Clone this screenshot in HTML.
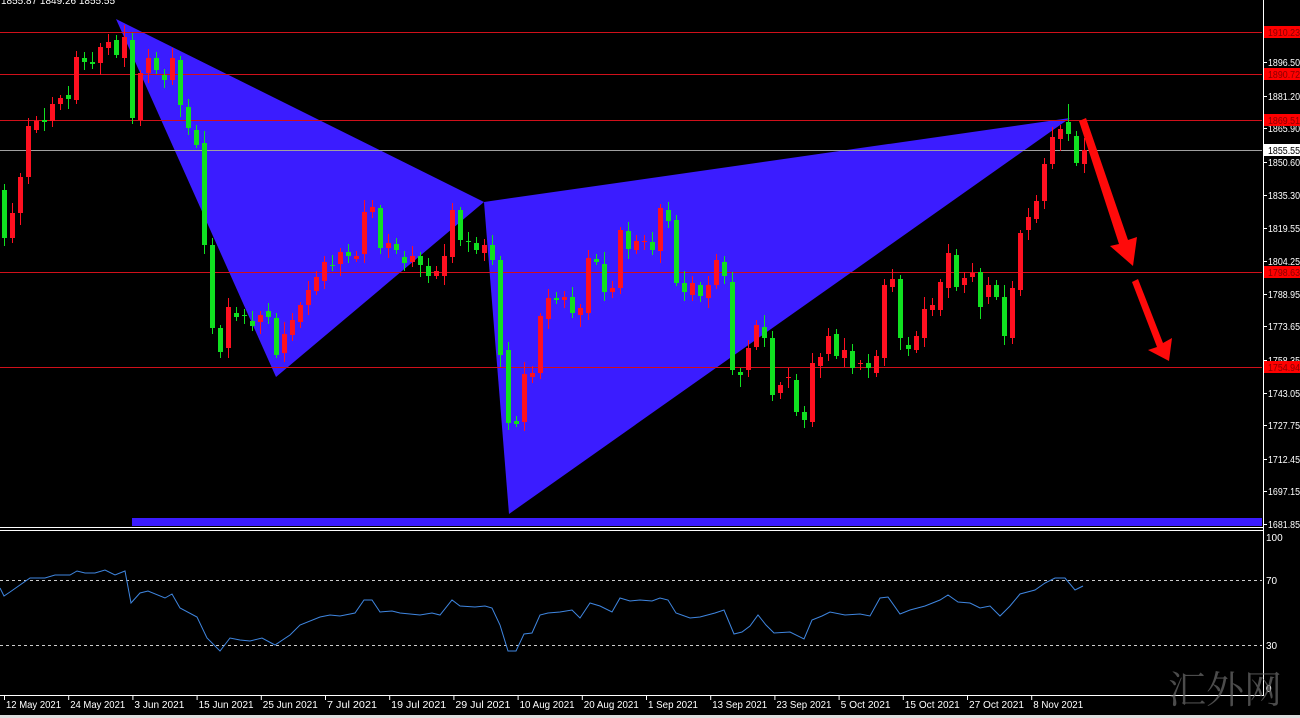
<!DOCTYPE html>
<html><head><meta charset="utf-8">
<style>
html,body{margin:0;padding:0;background:#000;overflow:hidden}
svg{display:block}
text{font-family:"Liberation Sans","DejaVu Sans",sans-serif;font-size:10px;fill:#fff}
</style></head>
<body>
<svg id="s" width="1300" height="718" viewBox="0 0 1300 718" xmlns="http://www.w3.org/2000/svg">
<rect width="1300" height="718" fill="#000"/>
<text x="1" y="4">1855.87 1849.26 1855.55</text>
<polygon points="116,19 484,202 276,377" fill="#3b1cff"/>
<polygon points="484,202 1070,118 509,514" fill="#3b1cff"/>
<g stroke="#d0101a" stroke-width="1">
<line x1="0" y1="32.5" x2="1262" y2="32.5"/>
<line x1="0" y1="74.5" x2="1262" y2="74.5"/>
<line x1="0" y1="120.5" x2="1262" y2="120.5"/>
<line x1="0" y1="272.5" x2="1262" y2="272.5"/>
<line x1="0" y1="367.5" x2="1262" y2="367.5"/>
</g>
<line x1="0" y1="150.5" x2="1262" y2="150.5" stroke="#a0a0a0"/>
<g id="candles"></g>
<polygon points="1079,121 1086,118 1128,240 1137,237 1133,266 1110,246 1119,244" fill="#ff0a0a"/>
<polygon points="1132,282 1138,279 1163,343 1172,338 1169,361 1148,350 1157,347" fill="#ff0a0a"/>
<rect x="132" y="518" width="1130" height="8" fill="#3b1cff"/>
<line x1="0" y1="527.5" x2="1263" y2="527.5" stroke="#fff"/>
<line x1="0" y1="530.5" x2="1263" y2="530.5" stroke="#fff"/>
<line x1="1263.5" y1="0" x2="1263.5" y2="696" stroke="#fff"/>
<line x1="0" y1="695.5" x2="1263" y2="695.5" stroke="#fff"/>
<g stroke="#ccc" stroke-dasharray="3,3">
<line x1="0" y1="580.5" x2="1262" y2="580.5"/>
<line x1="0" y1="645.5" x2="1262" y2="645.5"/>
</g>
<polyline id="rsi" fill="none" stroke="#3f86e0" stroke-width="1" points=""/>
<g id="axis"></g>
<g id="dates"></g>
<text x="1168" y="703" style="font-family:'Noto Serif CJK SC','Liberation Serif',serif;font-size:38px;fill:#666;opacity:0.75">汇外网</text>
<rect x="0" y="715" width="1300" height="3" fill="#ddd"/>
</svg>
<script>
var NS="http://www.w3.org/2000/svg";
function el(t,a,p){var e=document.createElementNS(NS,t);for(var k in a)e.setAttribute(k,a[k]);p.appendChild(e);return e;}
var C=[[190,238,'g'],[213,238,'r'],[177,213,'r'],[126,177,'r'],[121,130,'r'],[120,122,'g'],[104,121,'r'],[98,104,'r'],[95,99,'g'],[57,100,'r'],[58,62,'g'],[62,64,'g'],[47,63,'r'],[42,48,'r'],[40,55,'g'],[37,58,'r'],[40,118,'g'],[73,120,'r'],[58,73,'r'],[58,70,'g'],[75,80,'g'],[58,80,'r'],[60,105,'g'],[107,128,'g'],[130,145,'g'],[143,245,'g'],[245,328,'g'],[328,352,'g'],[307,348,'r'],[313,317,'g'],[315,316,'g'],[321,326,'g'],[315,322,'r'],[311,317,'g'],[318,355,'g'],[334,353,'r'],[320,335,'r'],[305,322,'r'],[290,305,'r'],[277,291,'r'],[262,281,'r'],[265,266,'g'],[252,264,'r'],[252,256,'g'],[256,259,'r'],[212,254,'r'],[207,212,'r'],[208,248,'g'],[243,248,'r'],[244,250,'g'],[257,263,'g'],[256,262,'r'],[256,265,'g'],[266,276,'g'],[271,276,'r'],[256,276,'r'],[210,257,'r'],[210,240,'g'],[241,242,'g'],[243,250,'g'],[245,253,'r'],[245,260,'g'],[260,355,'g'],[350,423,'g'],[421,424,'g'],[374,422,'r'],[373,377,'r'],[316,373,'r'],[298,319,'r'],[298,300,'g'],[297,300,'r'],[297,313,'g'],[308,315,'r'],[258,313,'r'],[259,262,'g'],[264,292,'g'],[288,292,'r'],[230,288,'r'],[231,249,'g'],[241,250,'r'],[241,242,'r'],[242,250,'g'],[208,251,'r'],[210,221,'g'],[220,283,'g'],[283,292,'g'],[283,295,'r'],[285,296,'g'],[285,298,'r'],[260,285,'r'],[262,276,'g'],[282,370,'g'],[372,375,'g'],[348,370,'r'],[325,347,'r'],[327,338,'g'],[338,395,'g'],[385,393,'r'],[377,378,'r'],[380,412,'g'],[412,420,'g'],[363,422,'r'],[357,366,'r'],[336,354,'r'],[334,356,'g'],[350,358,'r'],[351,368,'g'],[363,364,'r'],[363,368,'g'],[356,373,'r'],[285,358,'r'],[279,287,'r'],[279,338,'g'],[345,349,'g'],[336,350,'r'],[309,338,'r'],[305,310,'r'],[282,310,'r'],[253,288,'r'],[255,287,'g'],[278,285,'r'],[273,277,'r'],[272,307,'g'],[285,297,'r'],[285,297,'g'],[297,336,'g'],[288,338,'r'],[233,290,'r'],[217,230,'r'],[201,219,'r'],[164,201,'r'],[137,164,'r'],[129,139,'r'],[122,134,'g'],[136,163,'g'],[150,164,'r']];
var g=document.getElementById('candles');
var wt=[6,10,4,8,5,12,7,3,9,6];
for(var i=0;i<C.length;i++){var c=C[i],x=4+i*8,col=c[2]=='r'?'#ff1020':'#10e020';
var t=c[0]-wt[i%10],b=c[1]+wt[(i+3)%10];
if(i==133){t=104;}
el('line',{x1:x+.5,y1:t,x2:x+.5,y2:b,stroke:col},g);
el('rect',{x:x-2,y:c[0],width:5,height:Math.max(1,c[1]-c[0]),fill:col},g);}
var R=[0,588,4,596,10,592,30,578,45,578,55,575,70,575,77,571,85,573,95,573,105,570,115,575,125,571,131,603,140,593,148,591,165,598,172,594,180,608,197,617,207,638,220,651,230,638,240,640,250,641,262,638,275,645,290,635,300,625,320,617,330,615,340,616,355,613,364,600,372,600,380,612,392,611,400,613,410,614,420,615,432,613,440,615,452,600,460,606,475,607,485,606,492,608,500,625,508,651,516,651,524,634,532,633,540,615,548,613,560,612,572,610,580,618,590,603,600,606,612,612,620,598,630,601,640,600,652,601,660,598,668,600,676,613,690,618,700,617,715,613,724,610,734,634,742,632,750,626,758,615,766,625,774,633,790,632,804,639,812,620,822,616,830,612,845,615,860,614,870,616,880,598,888,597,900,614,910,610,925,606,940,600,948,595,958,602,970,603,980,608,990,606,1000,616,1010,606,1020,594,1035,590,1045,583,1055,578,1065,578,1075,590,1083,586];
var p=[];for(var i=0;i<R.length;i+=2)p.push(R[i]+','+R[i+1]);
document.getElementById('rsi').setAttribute('points',p.join(' '));
var ax=document.getElementById('axis');
var T=[[1896.50,62],[1881.20,96],[1865.90,128],[1850.60,162],[1835.30,195],[1819.55,228],[1804.25,261],[1788.95,294],[1773.65,326],[1758.35,360],[1743.05,393],[1727.75,425],[1712.45,459],[1697.15,491],[1681.85,524]];
T.forEach(function(t){el('line',{x1:1263,y1:t[1]+.5,x2:1267,y2:t[1]+.5,stroke:'#fff'},ax);var e=el('text',{x:1268,y:t[1]+4,textLength:32,lengthAdjust:'spacingAndGlyphs'},ax);e.textContent=t[0].toFixed(2);});
[[1910.23,32],[1890.72,74],[1869.51,120],[1798.63,272],[1754.94,367]].forEach(function(t){el('rect',{x:1264,y:t[1]-6,width:36,height:12,fill:'#f00'},ax);var e=el('text',{x:1268,y:t[1]+4,textLength:32,lengthAdjust:'spacingAndGlyphs'},ax);e.textContent=t[0].toFixed(2);e.setAttribute('style','fill:#800');});
el('rect',{x:1264,y:144,width:36,height:12,fill:'#fff'},ax);var e=el('text',{x:1268,y:154,textLength:32,lengthAdjust:'spacingAndGlyphs'},ax);e.textContent='1855.55';e.setAttribute('style','fill:#000');
[['100',537],['70',580],['30',645],['0',688]].forEach(function(t){var e=el('text',{x:1266,y:t[1]+4},ax);e.textContent=t[0];});
var D=['12 May 2021','24 May 2021','3 Jun 2021','15 Jun 2021','25 Jun 2021','7 Jul 2021','19 Jul 2021','29 Jul 2021','10 Aug 2021','20 Aug 2021','1 Sep 2021','13 Sep 2021','23 Sep 2021','5 Oct 2021','15 Oct 2021','27 Oct 2021','8 Nov 2021'];
var dg=document.getElementById('dates');
D.forEach(function(d,i){var x=4+i*64.2;el('line',{x1:x+.5,y1:695,x2:x+.5,y2:700,stroke:'#fff'},dg);var a={x:x+2,y:708};if(d.length==11){a.textLength=55;a.lengthAdjust='spacingAndGlyphs';}else{a.textLength=50;a.lengthAdjust='spacingAndGlyphs';}var e=el('text',a,dg);e.textContent=d;});
</script>
</body></html>
